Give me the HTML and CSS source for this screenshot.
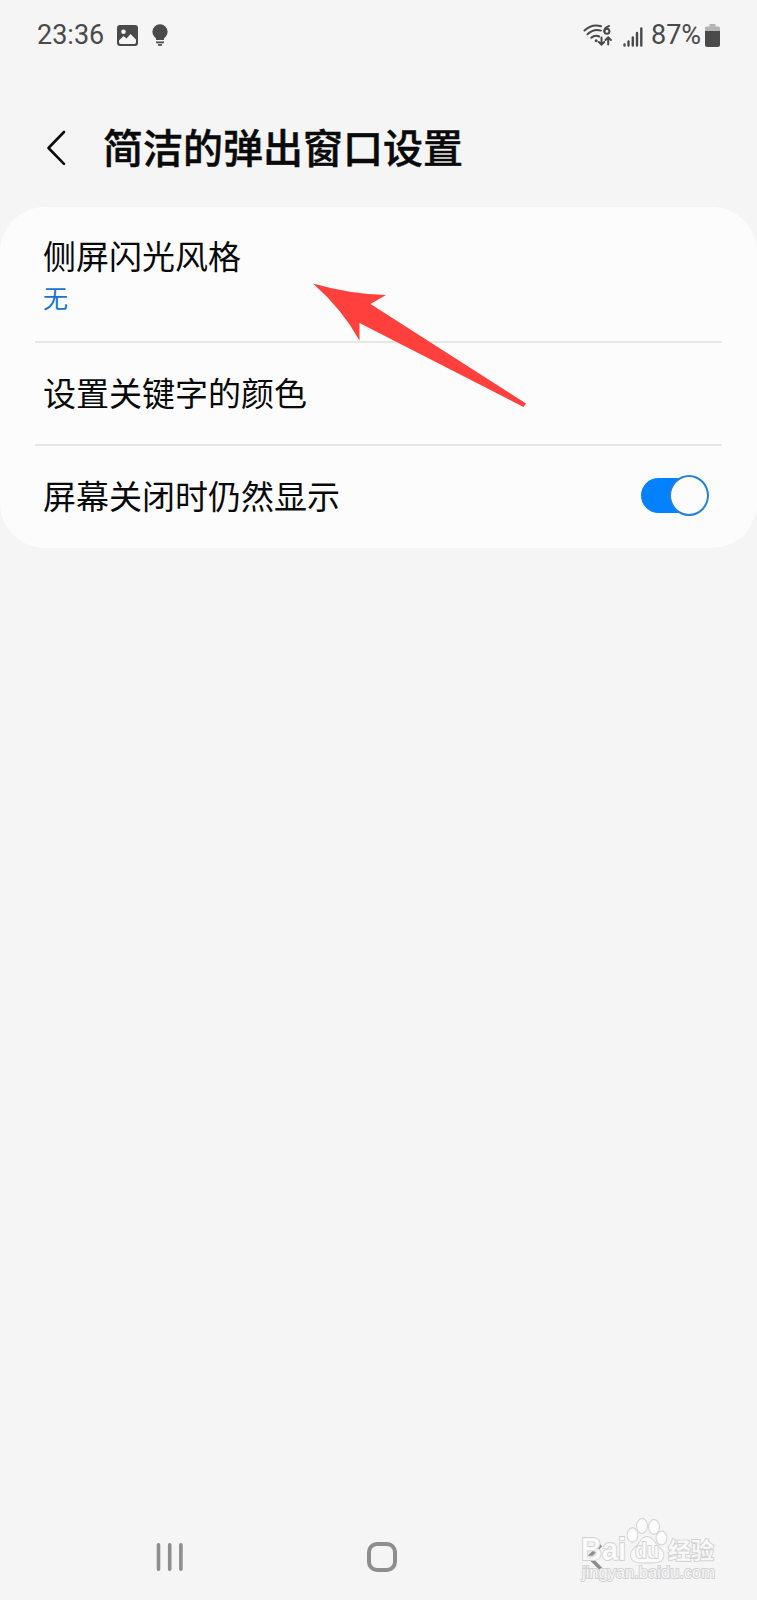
FILE: index.html
```html
<!DOCTYPE html>
<html lang="zh-CN">
<head>
  <meta charset="UTF-8">
  <title>简洁的弹出窗口设置</title>
  <link rel="stylesheet" href="styles.css">
</head>
<body>
  <div class="status-bar">
    <span class="time">23:36</span>
    <svg class="icon-photo" width="21" height="21" viewBox="0 0 21 21">
      <rect width="21" height="21" rx="3" fill="#4a4a4a"/>
      <circle cx="6.5" cy="6.8" r="2.3" fill="#f5f5f5"/>
      <path d="M2 15.5 L6.5 11 L9.5 13.6 L13.5 9 L19 14.5 V17.3 Q19 19 17.3 19 H3.7 Q2 19 2 17.3Z" fill="#f5f5f5"/>
    </svg>
    <svg class="icon-bulb" width="16" height="22" viewBox="0 0 16 22">
      <path d="M8 0.300a7.600 7.600 0 0 1 7.600 7.500c0 3-1.800 4.600-3.600 6.700V16H4v-1.500C2.200 12.400 0.400 10.800 0.400 7.800A7.600 7.600 0 0 1 8 0.300Z" fill="#4a4a4a"/>
      <path d="M4 18.300h8M6 20.900h4" stroke="#4a4a4a" stroke-width="1.800"/>
    </svg>
    <svg class="icon-wifi" width="30" height="23" viewBox="0 0 30 23">
      <g fill="none" stroke="#4a4a4a" stroke-width="2" stroke-linecap="round">
        <path d="M1.500 6.500Q9 -0.500 18 2.200"/>
        <path d="M4.500 10.300Q10.500 4.500 18 6.600"/>
        <path d="M8.300 13.800Q12 10.300 16.200 12.500"/>
        <path d="M18.500 13.500v6.800M15.800 18l2.700 2.600L21.200 18M25.200 20.500v-7M22.500 16l2.700-2.700L27.900 16"/>
        <path d="M26 2Q21.200 3.800 21.300 7.200"/>
        <circle cx="23.900" cy="7.300" r="2.500"/>
      </g>
      <circle cx="13.200" cy="16.800" r="1.500" fill="#4a4a4a"/>
    </svg>
    <svg class="icon-signal" width="20" height="20" viewBox="0 0 20 20">
      <path d="M1.500 17.500v1M5.500 14.500v4M9.800 10.500v8M14 6v12.500M18.300 1.500v17" stroke="#4a4a4a" stroke-width="2.400" stroke-linecap="round"/>
    </svg>
    <span class="battery-text">87%</span>
    <svg class="icon-battery" width="15" height="23" viewBox="0 0 15 23">
      <path d="M4.500 0h6v2.500h3Q15 2.500 15 4v4H0V4Q0 2.500 1.500 2.500h3Z" fill="#b5b5b5"/>
      <path d="M0 7h15v13.500q0 2.500-2.500 2.500h-10Q0 23 0 20.500Z" fill="#4a4a4a"/>
    </svg>
  </div>

  <div class="header">
    <svg class="back-btn" width="20" height="36" viewBox="0 0 20 36">
      <path d="M18 2 2.500 18l15.500 15.800" fill="none" stroke="#0a0a0a" stroke-width="2.600" stroke-linecap="round" stroke-linejoin="round"/>
    </svg>
    <h1>简洁的弹出窗口设置</h1>
  </div>

  <div class="card">
    <div class="row row-style">
      <div class="label">侧屏闪光风格</div>
      <div class="value">无</div>
    </div>
    <div class="divider"></div>
    <div class="row">
      <div class="label">设置关键字的颜色</div>
    </div>
    <div class="divider"></div>
    <div class="row">
      <div class="label">屏幕关闭时仍然显示</div>
      <div class="toggle"><div class="thumb"></div></div>
    </div>

    <svg class="arrow" width="214" height="126" viewBox="0 0 214 126">
      <path d="M0 0.500Q36 11 73 12L57.500 21L213 120.500L210.500 124L46.500 40V57.500Q29 26 0 0.500Z" fill="#ff403d"/>
    </svg>
  </div>

  <div class="nav-bar">
    <svg class="nav-recent" width="28" height="30" viewBox="0 0 28 30">
      <path d="M2.500 2.700v24.600M13.700 2.700v24.600M24.900 2.700v24.600" stroke="#8e8e8e" stroke-width="3.600" stroke-linecap="round"/>
    </svg>
    <div class="nav-home"></div>
    <svg class="nav-back" width="18" height="30" viewBox="0 0 18 30">
      <path d="M15 3 3 15l12 12" fill="none" stroke="#8e8e8e" stroke-width="3.600"/>
    </svg>
  </div>

  <svg class="watermark" width="150" height="75" viewBox="0 0 150 75">
    <g class="mark">
      <text class="mark-brand" x="2" y="45" textLength="45" lengthAdjust="spacingAndGlyphs">Bai</text>
      <ellipse cx="53.500" cy="20" rx="5" ry="6.800"/>
      <ellipse cx="63" cy="11" rx="5" ry="7"/>
      <ellipse cx="75" cy="12" rx="5" ry="7"/>
      <ellipse cx="82.500" cy="23" rx="5" ry="6.500"/>
      <path d="M68 22c6 0 7.500 6 11 9.500 4 3.500 7 7 5 11.500-2 5-8 4.500-16 4.500s-13 0.500-15.500-4.500c-2-5 1-8 5-11.500C61.500 28 62 22 68 22Z"/>
      <text class="mark-du" x="56" y="43" textLength="24" lengthAdjust="spacingAndGlyphs">du</text>
      <text class="mark-cn" x="89" y="44">经验</text>
      <text class="mark-url" x="3" y="63" textLength="133" lengthAdjust="spacingAndGlyphs">jingyan.baidu.com</text>
    </g>
  </svg>
</body>
</html>
```
FILE: styles.css
```css
* {
  box-sizing: border-box;
}

body {
  position: relative;
  display: flex;
  flex-direction: column;
  width: 757px;
  height: 1600px;
  margin: 0;
  background: #f5f5f5;
  color: #0a0a0a;
  font-family: "Noto Sans CJK SC", sans-serif;
  overflow: hidden;
}

.status-bar {
  display: flex;
  align-items: center;
  height: 70px;
  padding: 0 37px;
  color: #4a4a4a;
  font-family: Roboto, sans-serif;
  font-size: 27px;
}

.time {
  width: 80px;
}

.icon-bulb {
  margin-left: 14px;
}

.icon-wifi {
  margin-left: auto;
}

.icon-signal {
  margin-left: 10px;
  margin-top: 3px;
}

.battery-text {
  width: 54px;
  margin-left: 8px;
}

.header {
  display: flex;
  align-items: center;
  height: 137px;
  padding: 20px 0 4px 46px;
}

.back-btn {
  margin-top: 3px;
}

.header h1 {
  margin: -2px 0 0 37px;
  font-size: 40px;
  font-weight: 500;
  line-height: 60px;
  -webkit-text-stroke: 0.5px #0a0a0a;
}

.card {
  position: relative;
  height: 341px;
  background: #fcfcfc;
  border-radius: 45px;
}

.row {
  display: flex;
  align-items: center;
  justify-content: space-between;
  height: 101px;
  padding: 0 48px 3px 43px;
}

.row-style {
  flex-direction: column;
  align-items: flex-start;
  justify-content: flex-start;
  height: 134px;
  padding-top: 24px;
}

.label {
  font-size: 33px;
  line-height: 48px;
}

.value {
  color: #1775d1;
  font-size: 25px;
  line-height: 36px;
}

.divider {
  height: 2px;
  margin: 0 35px;
  background: #e6e6e6;
}

.toggle {
  display: flex;
  align-items: center;
  justify-content: flex-end;
  width: 68px;
  height: 41px;
}

.toggle::before {
  content: "";
  flex-shrink: 0;
  width: 48px;
  height: 35px;
  margin-right: -20px;
  background: #0381fe;
  border-radius: 18px 0 0 18px;
}

.thumb {
  flex-shrink: 0;
  width: 40px;
  height: 41px;
  background: #fcfcfc;
  border: 2px solid #2482d8;
  border-radius: 50%;
}

/* pointer drawn over the list */
.arrow {
  position: absolute;
  left: 313px;
  top: 76px;
}

.nav-bar {
  display: flex;
  align-items: center;
  height: 86px;
  margin-top: auto;
  padding: 0 0 0 156px;
}

.nav-home {
  width: 30px;
  height: 30px;
  margin-left: 183px;
  border: 4px solid #8e8e8e;
  border-radius: 10px;
}

.nav-back {
  margin-left: 189px;
}

.watermark {
  position: absolute;
  left: 579px;
  top: 1515px;
}

.mark {
  fill: #fdfdfd;
  fill-opacity: 0.85;
  stroke: #d2d2d2;
  stroke-width: 1.8px;
  paint-order: stroke;
  font-family: "Liberation Sans", "Noto Sans CJK SC", sans-serif;
}

.mark-brand {
  font-size: 31px;
  font-weight: bold;
}

.mark-du {
  font-size: 22px;
  font-weight: bold;
}

.mark-cn {
  font-family: "Noto Sans CJK SC", sans-serif;
  font-size: 23px;
  font-weight: bold;
}

.mark-url {
  font-size: 16px;
}
```
